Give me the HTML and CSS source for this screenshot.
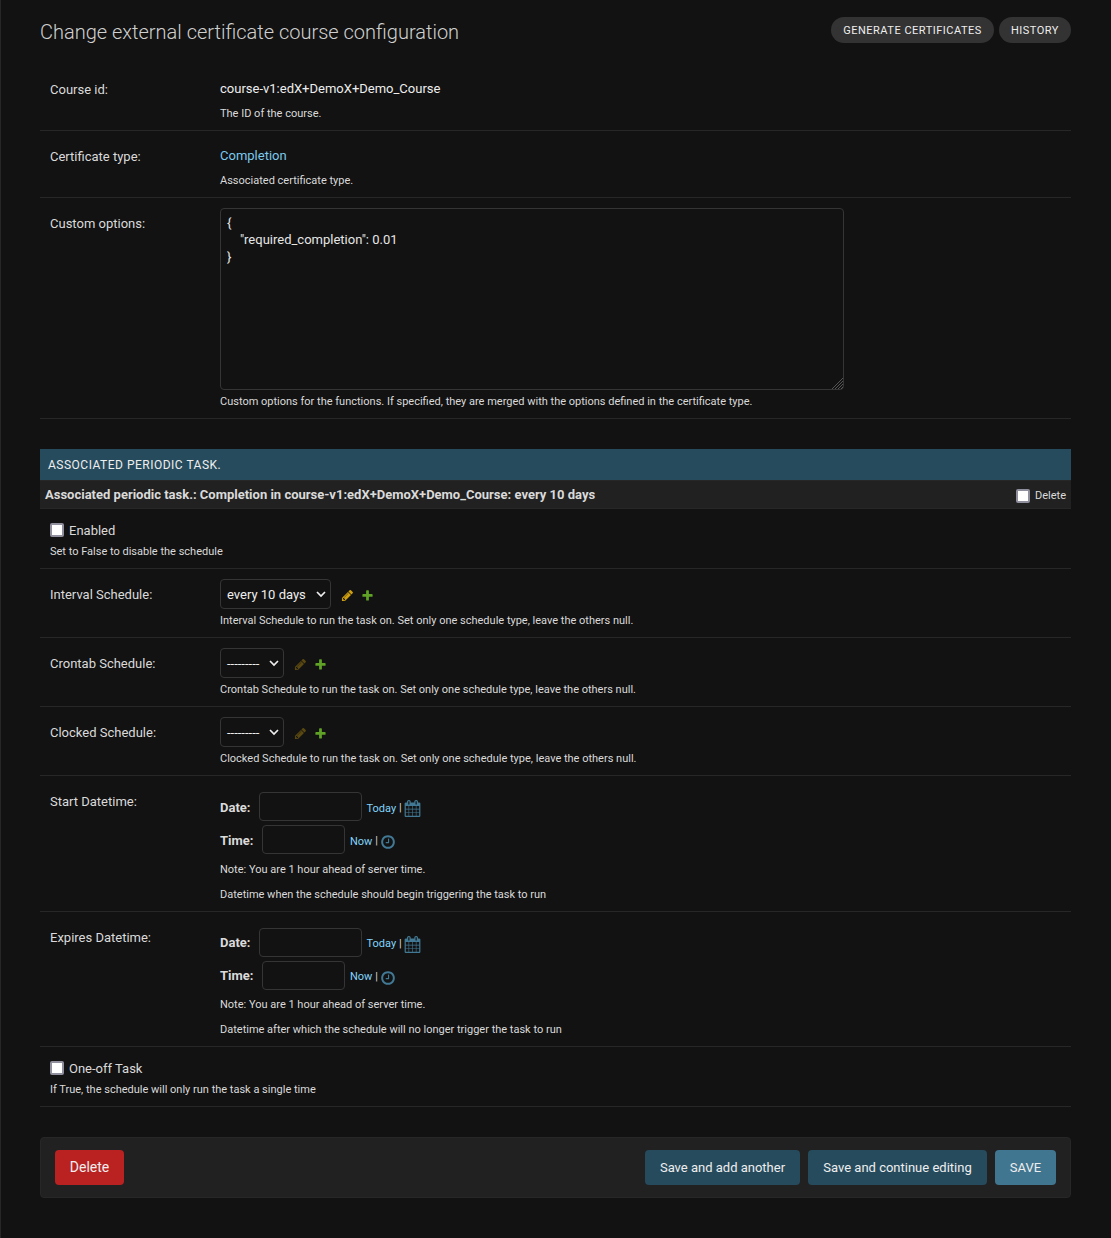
FILE: index.html
```html
<!DOCTYPE html>
<html lang="en">
<head>
<meta charset="utf-8">
<title>Change external certificate course configuration</title>
<link rel="stylesheet" href="styles.css">
</head>
<body>
<svg class="defs" aria-hidden="true">
  <symbol id="pencil" viewBox="0 0 1792 1792"><path d="M491 1536l91-91-235-235-91 91v107h128v128h107zm523-928q0-22-22-22-10 0-17 7l-542 542q-7 7-7 17 0 22 22 22 10 0 17-7l542-542q7-7 7-17zm-54-192l416 416-832 832h-416v-416zm683 96q0 53-37 90l-166 166-416-416 166-165q36-38 90-38 53 0 91 38l235 234q37 39 37 91z"/></symbol>
  <symbol id="plus" viewBox="0 0 1792 1792"><path d="M1600 796v192q0 40-28 68t-68 28h-416v416q0 40-28 68t-68 28h-192q-40 0-68-28t-28-68v-416h-416q-40 0-68-28t-28-68v-192q0-40 28-68t68-28h416v-416q0-40 28-68t68-28h192q40 0 68 28t28 68v416h416q40 0 68 28t28 68z"/></symbol>
  <symbol id="calendar" viewBox="0 0 1792 1792"><path d="M192 1664h288v-288h-288v288zm352 0h320v-288h-320v288zm-352-352h288v-320h-288v320zm352 0h320v-320h-320v320zm-352-384h288v-288h-288v288zm736 736h320v-288h-320v288zm-384-736h320v-288h-320v288zm768 736h288v-288h-288v288zm-384-352h320v-320h-320v320zm-352-864v-288q0-13-9.500-22.500t-22.500-9.500h-64q-13 0-22.500 9.500t-9.500 22.500v288q0 13 9.500 22.500t22.500 9.500h64q13 0 22.500-9.500t9.500-22.500zm736 864h288v-320h-288v320zm-384-384h320v-288h-320v288zm384 0h288v-288h-288v288zm32-480v-288q0-13-9.500-22.500t-22.500-9.500h-64q-13 0-22.500 9.500t-9.500 22.500v288q0 13 9.500 22.500t22.500 9.500h64q13 0 22.500-9.500t9.500-22.500zm384-64v1280q0 52-38 90t-90 38h-1408q-52 0-90-38t-38-90v-1280q0-52 38-90t90-38h128v-96q0-66 47-113t113-47h64q66 0 113 47t47 113v96h384v-96q0-66 47-113t113-47h64q66 0 113 47t47 113v96h128q52 0 90 38t38 90z"/></symbol>
  <symbol id="clock" viewBox="0 0 1792 1792"><path d="M1024 544v448q0 14-9 23t-23 9h-320q-14 0-23-9t-9-23v-64q0-14 9-23t23-9h224v-352q0-14 9-23t23-9h64q14 0 23 9t9 23zm416 352q0-148-73-273t-198-198-273-73-273 73-198 198-73 273 73 273 198 198 273 73 273-73 198-198 73-273zm224 0q0 209-103 385.500t-279.500 279.500-385.500 103-385.500-103-279.500-279.500-103-385.500 103-385.500 279.500-279.500 385.500-103 385.500 103 279.500 279.500 103 385.500z"/></symbol>
  <symbol id="chevron" viewBox="0 0 10 8"><path d="M1 2l4 4 4-4" fill="none" stroke="#eee" stroke-width="1.700"/></symbol>
</svg>
<main class="content">
  <header class="head">
    <h1>Change external certificate course configuration</h1>
    <nav class="tools"><a class="pill pill-generate">Generate certificates</a><a class="pill pill-history">History</a></nav>
  </header>

  <section class="module">
    <div class="row">
      <span class="label">Course id:</span>
      <div class="field"><div class="value">course-v1:edX+DemoX+Demo_Course</div><div class="help">The ID of the course.</div></div>
    </div>
    <div class="row">
      <span class="label">Certificate type:</span>
      <div class="field"><div class="value"><a class="link">Completion</a></div><div class="help">Associated certificate type.</div></div>
    </div>
    <div class="row row-options">
      <span class="label">Custom options:</span>
      <div class="field">
        <div class="area"><pre>{
    "required_completion": 0.01
}</pre><svg class="grip" viewBox="0 0 11 11"><path d="M0 11L11 0M3 11l8-8M6 11l5-5M9 11l2-2"/></svg></div>
        <div class="help">Custom options for the functions. If specified, they are merged with the options defined in the certificate type.</div>
      </div>
    </div>
  </section>

  <section class="inline-group">
    <h2>Associated periodic task.</h2>
    <h3><span>Associated periodic task.: Completion in course-v1:edX+DemoX+Demo_Course: every 10 days</span><label class="remove"><span class="box"></span>Delete</label></h3>
    <div class="row row-check">
      <label class="check"><span class="box"></span>Enabled</label>
      <div class="help">Set to False to disable the schedule</div>
    </div>
    <div class="row row-select">
      <span class="label">Interval Schedule:</span>
      <div class="field">
        <div class="related"><span class="select select-wide">every 10 days<svg class="chevron"><use href="#chevron"/></svg></span><svg class="icon edit"><use href="#pencil"/></svg><svg class="icon add"><use href="#plus"/></svg></div>
        <div class="help">Interval Schedule to run the task on. Set only one schedule type, leave the others null.</div>
      </div>
    </div>
    <div class="row row-select">
      <span class="label">Crontab Schedule:</span>
      <div class="field">
        <div class="related"><span class="select">---------<svg class="chevron"><use href="#chevron"/></svg></span><svg class="icon edit off"><use href="#pencil"/></svg><svg class="icon add"><use href="#plus"/></svg></div>
        <div class="help">Crontab Schedule to run the task on. Set only one schedule type, leave the others null.</div>
      </div>
    </div>
    <div class="row row-select">
      <span class="label">Clocked Schedule:</span>
      <div class="field">
        <div class="related"><span class="select">---------<svg class="chevron"><use href="#chevron"/></svg></span><svg class="icon edit off"><use href="#pencil"/></svg><svg class="icon add"><use href="#plus"/></svg></div>
        <div class="help">Clocked Schedule to run the task on. Set only one schedule type, leave the others null.</div>
      </div>
    </div>
    <div class="row row-date">
      <span class="label">Start Datetime:</span>
      <div class="field">
        <div class="when"><b>Date:</b><span class="input input-date"></span><a class="link">Today</a><i>|</i><svg class="cal"><use href="#calendar"/></svg></div>
        <div class="when"><b>Time:</b><span class="input input-time"></span><a class="link">Now</a><i>|</i><svg class="clk"><use href="#clock"/></svg></div>
        <div class="help note">Note: You are 1 hour ahead of server time.</div>
        <div class="help">Datetime when the schedule should begin triggering the task to run</div>
      </div>
    </div>
    <div class="row row-date row-expires">
      <span class="label">Expires Datetime:</span>
      <div class="field">
        <div class="when"><b>Date:</b><span class="input input-date"></span><a class="link">Today</a><i>|</i><svg class="cal"><use href="#calendar"/></svg></div>
        <div class="when"><b>Time:</b><span class="input input-time"></span><a class="link">Now</a><i>|</i><svg class="clk"><use href="#clock"/></svg></div>
        <div class="help note">Note: You are 1 hour ahead of server time.</div>
        <div class="help">Datetime after which the schedule will no longer trigger the task to run</div>
      </div>
    </div>
    <div class="row row-check">
      <label class="check"><span class="box"></span>One-off Task</label>
      <div class="help">If True, the schedule will only run the task a single time</div>
    </div>
  </section>

  <footer class="submit">
    <a class="btn btn-delete">Delete</a>
    <a class="btn btn-another">Save and add another</a>
    <a class="btn btn-continue">Save and continue editing</a>
    <a class="btn btn-save">SAVE</a>
  </footer>
</main>
</body>
</html>
```
FILE: styles.css
```css
* { box-sizing: border-box; }
body { margin: 0; background: #121212; color: #dadada; font: 13px/20px Roboto, "Liberation Sans", sans-serif; }
.defs { display: none; }
svg { display: block; flex: none; }
.content { min-height: 1238px; padding: 0 40px 0 39px; border-left: 1px solid #272727; }

.head { display: flex; justify-content: space-between; align-items: flex-start; height: 64px; padding-top: 17px; }
h1 { margin: 0; color: #d0d0d0; font-size: 20px; font-weight: 300; line-height: 30px; white-space: nowrap; }
.tools { display: flex; gap: 5px; }
.pill { height: 26px; border-radius: 13px; background: #333; color: #eee; font-size: 11px; line-height: 27px; letter-spacing: .5px; text-transform: uppercase; text-align: center; white-space: nowrap; }
.pill-generate { width: 163px; }
.pill-history { width: 72px; }

.row { display: flex; height: 67px; padding: 15px 10px 0; border-bottom: 1px solid #272727; }
.label { width: 170px; padding-top: 1px; }
.field { flex: 1; }
.value { color: #eee; }
.help { margin-top: 7px; font-size: 11px; line-height: 15px; }
.link { color: #81d4fa; }
.value .link { color: #7bc9ed; }

.row-options { height: 221px; padding-top: 10px; }
.row-options .label { padding-top: 6px; }
.area { position: relative; width: 624px; height: 182px; border: 1px solid #353535; border-radius: 4px; padding: 5px 6px; color: #e6e6e6; }
.area pre { margin: 0; font: inherit; line-height: 17px; }
.grip { position: absolute; right: 0; bottom: 0; width: 11px; height: 11px; stroke: #666; stroke-width: .8; }
.row-options .help { margin-top: 4px; }

.inline-group { margin-top: 30px; }
h2 { margin: 0; height: 31px; padding-left: 8px; background: #264b5d; color: #eee; font-size: 12px; font-weight: 400; line-height: 32px; letter-spacing: .5px; text-transform: uppercase; }
h3 { display: flex; justify-content: space-between; align-items: center; margin: 0; height: 29px; padding: 0 5px; border: solid #272727; border-width: 1px 0; background: #212121; font-size: 13px; font-weight: 700; }
.remove { display: flex; align-items: center; gap: 5px; height: 27px; padding-top: 2px; font-size: 11px; font-weight: 400; }
.box { width: 14px; height: 14px; border: 2px solid #8f8f9d; border-radius: 2px; background: #fff; }

.row-check { display: block; height: 60px; padding-top: 12px; }
.check { display: flex; align-items: center; gap: 5px; height: 20px; }
.check .box { margin-bottom: 2px; }
.row-check .help { margin-top: 3px; }

.row-select { height: 69px; padding-top: 10px; }
.row-select .label { padding-top: 6px; }
.related { display: flex; align-items: center; height: 30px; }
.select { display: flex; align-items: center; justify-content: space-between; width: 64px; height: 30px; padding: 1px 4px 0 6px; border: 1px solid #353535; border-radius: 4px; color: #eee; }
.select-wide { width: 111px; }
.chevron { width: 10px; height: 8px; margin-bottom: 1px; }
.icon { width: 13px; height: 13px; margin-top: 3px; }
.edit { margin-left: 10px; fill: #d0a010; }
.add { margin-left: 7px; fill: #5fa225; }
.off { opacity: .38; }
.row-select .help { margin-top: 4px; }

.row-date { height: 136px; padding-top: 16px; }
.row-expires { height: 135px; }
.row-date .label { padding-top: 0; }
.when { display: flex; align-items: center; height: 29px; margin-bottom: 4px; font-size: 11px; }
.when b { padding-top: 2px; font-size: 13px; }
.when i { font-style: normal; margin: 0 2px 0 2.8px; padding-top: 3px; }
.when .link { padding-top: 4px; }
.row-expires b { padding-top: 0; }
.row-expires i { padding-top: 2px; }
.row-expires .when .link { padding-top: 2px; }
.input { height: 29px; margin: 0 5px 0 8px; border: 1px solid #353535; border-radius: 4px; }
.input-date { width: 103px; }
.input-time { width: 83px; margin-left: 8.5px; }
.cal { width: 17px; height: 17px; margin-top: 3px; fill: #417893; }
.clk { width: 16px; height: 16px; margin-top: 4px; fill: #417893; }
.row-date .note { margin-top: 8px; }
.row-expires .note { margin-top: 7px; }
.row-date .help + .help { margin-top: 10px; }

.submit { display: flex; gap: 8px; height: 61px; margin-top: 30px; padding: 12px 14px; border: 1px solid #272727; border-radius: 4px; background: #212121; }
.btn { height: 35px; border-radius: 4px; background: #264b5d; color: #eee; line-height: 35px; text-align: center; }
.btn-delete { width: 69px; margin-right: auto; background: #ba2121; font-size: 14px; }
.btn-another { width: 155px; }
.btn-continue { width: 179px; }
.btn-save { width: 61px; background: #417690; }
```
